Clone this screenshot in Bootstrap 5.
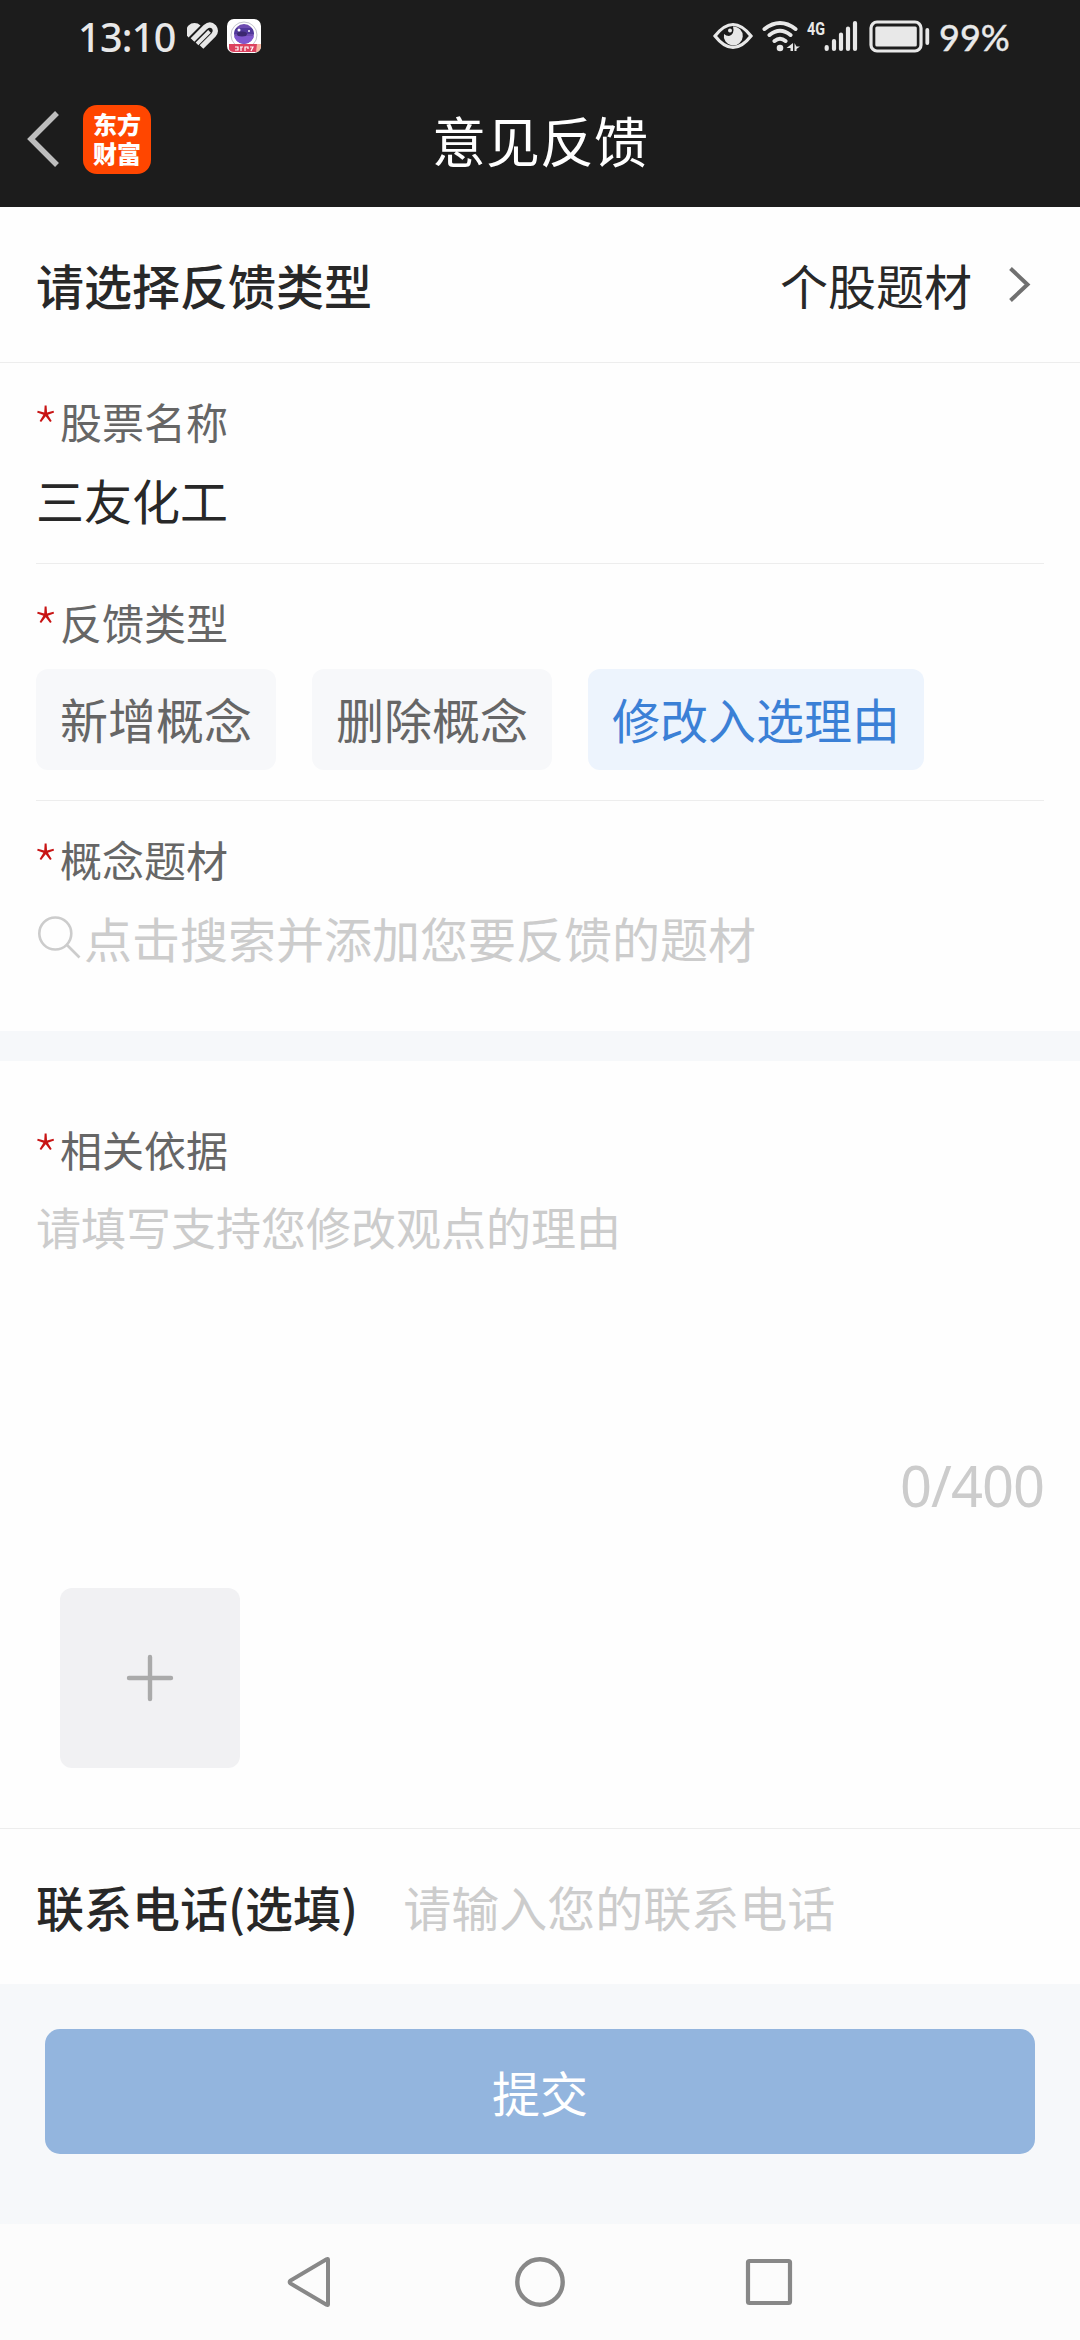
<!DOCTYPE html>
<html lang="zh-CN">
<head>
<meta charset="utf-8">
<meta name="viewport" content="width=device-width, initial-scale=1">
<title>意见反馈</title>
<link href="https://cdn.jsdelivr.net/npm/bootstrap@5.3.0/dist/css/bootstrap.min.css" rel="stylesheet">
<style>
  body { font-family: "Noto Sans CJK SC", sans-serif; color: #282828; background: #fefefe; width: 1080px; }
  svg { display: block; flex: none; }
  .topbar { background: #1c1c1c; height: 207px; }
  .statusbar { height: 75px; padding: 0 72px 0 78px; color: #e8e8e8; }
  .clock { font: 500 39.5px/75px "Noto Sans", sans-serif; letter-spacing: -.7px; width: 109px; white-space: nowrap; padding-bottom: 1px; }
  .percent { font: 500 36px/74px Lato, sans-serif; -webkit-text-stroke: .3px #e8e8e8; width: 69px; white-space: nowrap; padding-bottom: 1px; }
  .titlebar { height: 132px; padding: 0 27px; display: grid; grid-template-columns: 1fr auto 1fr; }
  .titlebar h1 { font-size: 54px; line-height: 80px; font-weight: 400; color: #fff; padding-bottom: 2px; }
  .title-left { padding-bottom: 4px; }
  .applogo { width: 68px; height: 69px; border-radius: 14px; background: #ff4600; color: #fff; font: 900 24px/29px "Liberation Sans", "Noto Sans CJK SC", sans-serif; text-align: center; padding-top: 6px; margin-left: 24px; }
  .t48 { font-size: 48px; line-height: 72px; }
  .strong-text { font-weight: 500; }
  .pick-row { height: 156px; padding: 0 48px 2px 36px; border-bottom: 1px solid #ededed; }
  .phone-row { height: 155px; padding: 0 36px 2px; gap: 45px; }
  .arrow { margin: 2px 0 0 36px; }
  .field-block { margin: 0 36px; padding-top: 28px; border-bottom: 1px solid #ededed; }
  .field-label { font-size: 42px; line-height: 60px; color: #666; }
  .field-label b { display: inline-block; width: 24px; font-size: 64px; line-height: 0; font-weight: 100; vertical-align: -17px; text-indent: -4px; color: #c81414; }
  .name-block { height: 201px; } .type-block { height: 237px; } .topic-block { height: 230px; border: 0; }
  .gap12 { margin-top: 12px; }
  .chips { gap: 36px; margin-top: 17px; }
  .chip { height: 101px; border: 0; border-radius: 12px; background: #f7f8fa; color: #666; font-size: 48px; line-height: 72px; padding: 13px 24px 16px; }
  .chip-on { background: #edf4fd; color: #3b80d6; }
  .hint { color: #ccc; }
  .strip { height: 30px; background: #f6f8fa; }
  .reason-block { height: 768px; padding: 58px 36px 0; border-bottom: 1px solid #ededed; }
  .reason { font-size: 45px; line-height: 68px; height: 252px; margin-top: 14px; }
  .counter { font: 400 56px/80px "Noto Sans", sans-serif; letter-spacing: -1px; height: 143px; }
  .adder { width: 180px; height: 180px; margin-left: 24px; border: 0; border-radius: 12px; background: #f1f1f3; }
  .submit-area { height: 240px; padding: 45px 45px 0; background: #f6f8fa; }
  .submit { height: 125px; border: 0; border-radius: 15px; background: #93b5de; color: #fff; font-size: 48px; line-height: 72px; padding: 0 0 2px; }
  .navkeys { height: 116px; background: #fcfcfc; padding: 0 284px; }
</style>
</head>
<body>
<header class="topbar">
  <div class="statusbar d-flex align-items-center">
    <span class="clock">13:10</span>
    <svg width="76" height="75" viewBox="187 0 76 75">
      <defs><clipPath id="lens"><circle cx="244" cy="34" r="10"/></clipPath></defs>
      <path d="M188.500 37.500 A8.300 8.300 0 0 1 200.500 25.500 Z" fill="#e8e8e8"/>
      <path d="M192.500 40 L205.500 27 Q210 23 214 27 Q217 31 213.500 35 L201.500 47" fill="none" stroke="#e8e8e8" stroke-width="5.200"/>
      <path d="M197 43.800 L209.500 31.300" stroke="#e8e8e8" stroke-width="3.800"/>
      <rect x="227" y="19" width="34" height="34" rx="7" fill="#fff"/>
      <circle cx="244" cy="35" r="13" fill="none" stroke="#c3c3cc" stroke-width="1"/>
      <circle cx="244" cy="34" r="10" fill="#6d4bb0"/>
      <g clip-path="url(#lens)"><path d="M234 28H254V34H234Z" fill="#50389a"/><path d="M234 36H254V46H234Z" fill="#8057ce"/><ellipse cx="242" cy="34" rx="5" ry="2.500" fill="#3b2870"/></g>
      <circle cx="239" cy="30" r="1.500" fill="#fff"/><circle cx="249" cy="31" r="1" fill="#fff"/>
      <path d="M229 44H259L257 52H234Q230 52 229 49Z" fill="#dc425f"/><path d="M257 44H261V47Q260 52 256 52Z" fill="#f4b5a0"/>
      <path d="M235 47h3v3h-3M240 47h3m-2 0v4M245 51v-4h3v2M250 47h3l-2 4" fill="none" stroke="#fff" stroke-width="1.200"/>
    </svg>
    <svg class="ms-auto" width="226" height="75" viewBox="713 0 226 75" fill="none" stroke="#e8e8e8">
      <path d="M715 36 Q733 13 751 36 Q733 59 715 36Z" stroke-width="3.200"/>
      <path d="M724 34 A9.500 9.500 0 1 0 733 26.500 Q735 34 729 36 Q726 36 724 34Z" fill="#e8e8e8" stroke="none"/>
      <circle cx="730" cy="30.500" r="2" fill="#e8e8e8" stroke="none"/>
      <g stroke-width="4" stroke-linecap="round"><path d="M764.500 29 Q780 17 795.500 29 M769.500 35 Q780 26.500 790.500 35 M774.500 41 Q780 36.500 785.500 41"/></g>
      <circle cx="780" cy="48" r="3.300" fill="#e8e8e8" stroke="none"/>
      <path d="M793 43V51H790.500V48H786.500Z M794.500 43V51H796.500V49L800 46.500H796.500Z" fill="#e8e8e8" stroke="none"/>
      <text x="807" y="35" font-family="Roboto, sans-serif" font-size="19" font-weight="700" textLength="18" lengthAdjust="spacingAndGlyphs" fill="#e8e8e8" stroke="none">4G</text>
      <g stroke-width="4.200" stroke-linecap="round"><path d="M826.700 47V49 M834 41V49 M841 34.500V49 M848 28.500V49 M855 23V49"/></g>
      <rect x="871" y="22" width="50" height="29" rx="6" stroke-width="3.200"/>
      <rect x="875.300" y="26.500" width="41.500" height="20" rx="1.500" fill="#e8e8e8" stroke="none"/>
      <path d="M927.300 30V43" stroke-width="3.800" stroke-linecap="round"/>
    </svg>
    <span class="percent">99%</span>
  </div>
  <div class="titlebar align-items-center">
    <div class="title-left d-flex align-items-center">
      <svg width="32" height="56" viewBox="0 0 32 56"><path d="M30 2 L4 28 L30 54" fill="none" stroke="#bdbdbd" stroke-width="5.500"/></svg>
      <div class="applogo">东方<br>财富</div>
    </div>
    <h1 class="m-0">意见反馈</h1>
  </div>
</header>

<main>
  <section class="pick-row d-flex align-items-center t48">
    <span class="strong-text">请选择反馈类型</span>
    <span class="ms-auto">个股题材</span>
    <svg class="arrow" width="24" height="38" viewBox="0 0 24 38"><path d="M2.500 2.500 L19.500 18.500 L2.500 34.500" fill="none" stroke="#707070" stroke-width="4"/></svg>
  </section>

  <section class="field-block name-block">
    <div class="field-label"><b>*</b>股票名称</div>
    <div class="t48 gap12">三友化工</div>
  </section>

  <section class="field-block type-block">
    <div class="field-label"><b>*</b>反馈类型</div>
    <div class="chips d-flex">
      <button class="btn chip">新增概念</button>
      <button class="btn chip">删除概念</button>
      <button class="btn chip chip-on">修改入选理由</button>
    </div>
  </section>

  <section class="field-block topic-block">
    <div class="field-label"><b>*</b>概念题材</div>
    <div class="t48 gap12 hint d-flex align-items-center">
      <svg width="48" height="72" viewBox="36 901 48 72" fill="none" stroke="#ccc" stroke-width="2.600"><circle cx="55.300" cy="933.500" r="16"/><path d="M67 945 L79.500 957.500"/></svg>
      <span>点击搜索并添加您要反馈的题材</span>
    </div>
  </section>

  <div class="strip"></div>

  <section class="reason-block">
    <div class="field-label"><b>*</b>相关依据</div>
    <div class="reason hint">请填写支持您修改观点的理由</div>
    <div class="counter hint text-end">0/400</div>
    <button class="btn adder p-0 d-flex align-items-center justify-content-center" aria-label="添加图片">
      <svg width="48" height="48" viewBox="0 0 48 48"><path d="M24 3V45M3 24H45" stroke="#aaa" stroke-width="4.400" stroke-linecap="round"/></svg>
    </button>
  </section>

  <section class="phone-row d-flex align-items-center t48">
    <span class="strong-text">联系电话(选填)</span>
    <span class="hint">请输入您的联系电话</span>
  </section>

  <section class="submit-area">
    <button class="btn submit w-100">提交</button>
  </section>
</main>

<footer class="navkeys d-flex align-items-center justify-content-between">
  <svg width="52" height="56" viewBox="284 2254 52 56"><path d="M328 2259.500 V2304.500 Q328 2305.500 326.500 2304.800 L290.500 2283.500 Q289 2282 290.500 2280.500 L326.500 2259.200 Q328 2258.500 328 2259.500Z" fill="none" stroke="#888" stroke-width="4"/></svg>
  <svg width="56" height="56" viewBox="0 0 56 56"><circle cx="28" cy="28" r="22.700" fill="none" stroke="#888" stroke-width="4.400"/></svg>
  <svg width="52" height="56" viewBox="744 2254 52 56"><rect x="748" y="2261" width="42" height="42" rx="1.500" fill="none" stroke="#888" stroke-width="4.200"/></svg>
</footer>
<script src="https://cdn.jsdelivr.net/npm/bootstrap@5.3.0/dist/js/bootstrap.bundle.min.js"></script>
</body>
</html>
